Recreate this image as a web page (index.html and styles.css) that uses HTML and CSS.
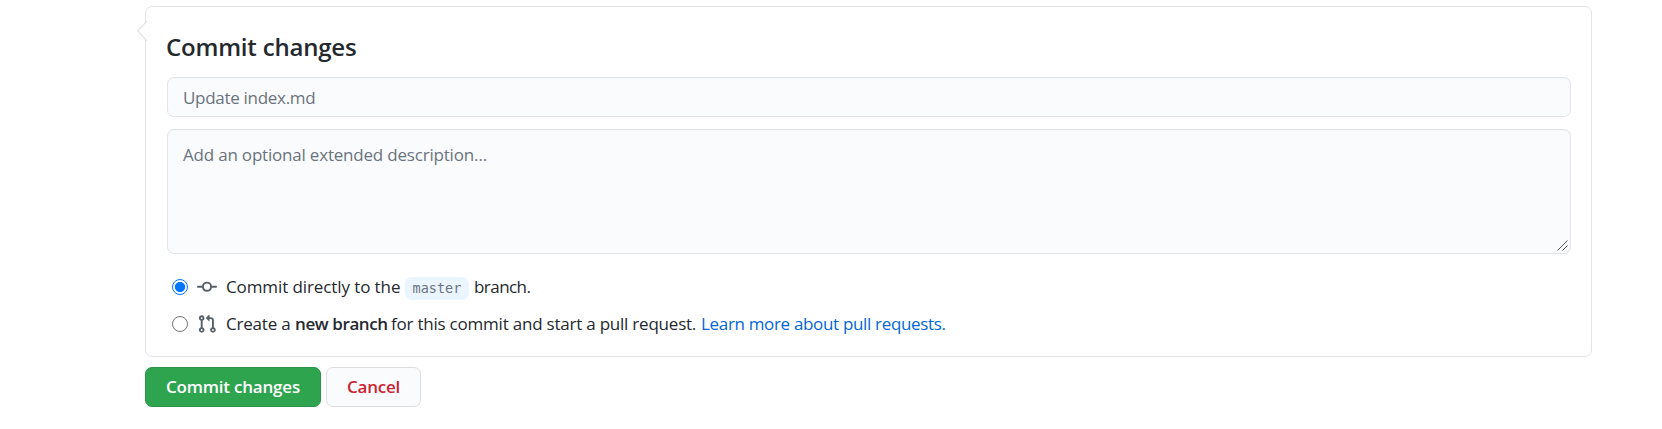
FILE: index.html
```
<!DOCTYPE html>
<html lang="en">
<head>
<meta charset="utf-8">
<title>Commit changes</title>
<link rel="stylesheet" href="styles.css">
</head>
<body>
<form class="commit">
  <section class="card">
    <svg class="caret" width="10" height="20" viewBox="0 0 10 20"><path d="M10 0L.8 10L10 20" fill="#fff" stroke="#e1e4e8" stroke-width="1.2"/></svg>
    <h3 class="title"><span>Commit changes</span></h3>
    <input class="field summary" type="text" placeholder="Update index.md">
    <div class="area">
      <textarea class="field description" placeholder="Add an optional extended description…"></textarea>
      <svg class="grip" width="11" height="11" viewBox="0 0 11 11" stroke="#555" stroke-width="1"><path d="M.5 10.5L10.5 .5M5.5 10.5L10.5 5.5"/></svg>
    </div>
    <label class="choice">
      <span class="radio radio-on"></span>
      <svg class="icon" width="20" height="20" viewBox="0 0 16 16" fill="#586069"><path fill-rule="evenodd" d="M10.5 7.75a2.5 2.5 0 11-5 0 2.5 2.5 0 015 0zm1.43.75a4.002 4.002 0 01-7.86 0H.75a.75.75 0 110-1.5h3.32a4.001 4.001 0 017.86 0h3.32a.75.75 0 110 1.5h-3.32z"/></svg>
      <span class="text t1">Commit directly to the</span><code class="branch">master</code><span class="text t2">branch.</span>
    </label>
    <label class="choice">
      <span class="radio"></span>
      <svg class="icon" width="20" height="20" viewBox="0 0 16 16" fill="#586069"><path fill-rule="evenodd" d="M7.177 3.073L9.573.677A.25.25 0 0110 .854v4.792a.25.25 0 01-.427.177L7.177 3.427a.25.25 0 010-.354zM3.75 2.5a.75.75 0 100 1.5.75.75 0 000-1.5zm-2.25.75a2.25 2.25 0 113 2.122v5.256a2.251 2.251 0 11-1.5 0V5.372A2.25 2.25 0 011.5 3.25zM11 2.5h-1V4h1a1 1 0 011 1v5.628a2.251 2.251 0 101.5 0V5A2.5 2.5 0 0011 2.5zm1 10.25a.75.75 0 111.5 0 .75.75 0 01-1.5 0zM3.75 12a.75.75 0 100 1.5.75.75 0 000-1.5z"/></svg>
      <span class="text t3">Create a</span><strong class="text t4">new branch</strong><span class="text t5">for this commit and start a pull request.</span><a class="text t6">Learn more about pull requests.</a>
    </label>
  </section>
  <div class="actions">
    <button class="btn primary" type="button"><span>Commit changes</span></button>
    <button class="btn danger" type="button"><span>Cancel</span></button>
  </div>
</form>
</body>
</html>
```
FILE: styles.css
```
* { box-sizing: border-box; }
body { margin: 0; background: #fff; color: #24292e; font: 17.5px/26px "Open Sans", "Noto Sans", sans-serif; }
.commit { padding: 6px 70px 0 145px; }
.card { position: relative; height: 351px; padding: 24px 20px 0 21px; border: 1px solid #e1e4e8; border-radius: 7px; }
.caret { position: absolute; left: -9px; top: 14px; }
.title { margin: 0 0 14px -1px; font-size: 24px; line-height: 32px; font-weight: 600; letter-spacing: -0.2px; }
.field { display: block; width: 100%; margin: 0; padding: 0 15px; border: 1px solid #e1e4e8; border-radius: 7px; background: #fafbfc; box-shadow: inset 0 1px 0 rgba(225,228,232,.2); font: inherit; font-size: 17px; letter-spacing: -0.2px; outline: 0; }
.field::placeholder { color: #6a737d; opacity: 1; }
.summary { height: 40px; margin-bottom: 12px; letter-spacing: -0.3px; }
.area { position: relative; margin-bottom: 20px; }
.description { height: 125px; padding: 12px 15px; resize: none; }
.grip { position: absolute; right: 3px; bottom: 3px; }
.choice { display: flex; align-items: center; height: 26px; margin: 0 0 11px 5px; white-space: nowrap; }
.radio { width: 16px; height: 16px; margin-right: 9px; border: 1px solid #767676; border-radius: 50%; background: #fff; }
.radio-on { border-color: #0075ff; background: radial-gradient(circle, #0075ff 4.7px, #fff 5.4px); }
.icon { margin-right: 9px; }
.text { font-size: 17px; flex: none; }
.t1 { width: 179px; letter-spacing: -0.1px; }
.t2 { letter-spacing: -0.55px; }
.branch { width: 64px; height: 23px; margin: 3px 5px 0 0; border-radius: 7px; background: #eaf5ff; color: #6a737d; font: 13.5px/22px "DejaVu Sans Mono", monospace; text-align: center; }
.t3 { width: 69px; letter-spacing: -0.2px; }
.t4 { width: 96px; font-weight: 600; letter-spacing: -0.4px; }
.t5 { width: 310px; letter-spacing: -0.22px; }
.t6 { color: #0366d6; letter-spacing: -0.33px; }
.actions { display: flex; gap: 5px; margin-top: 10px; }
.btn { height: 40px; padding: 0 0 0; border: 1px solid; border-radius: 7px; font: 600 17px/24px "Open Sans", "Noto Sans", sans-serif; letter-spacing: -0.2px; }
.primary { width: 176px; color: #fff; background: #2ea44f; border-color: #2b934a; }
.danger { width: 95px; color: #cb2431; background: #fafbfc; border-color: #dbdde0; }
```
